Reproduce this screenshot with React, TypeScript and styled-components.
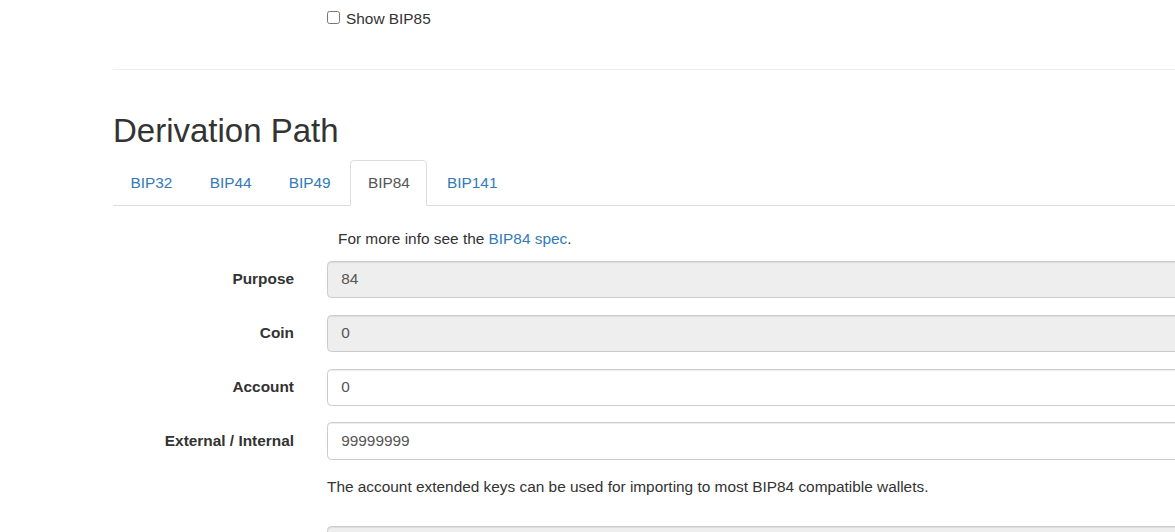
import React from "react";
import styled, { createGlobalStyle } from "styled-components";

const GlobalStyle = createGlobalStyle`
  html, body {
    margin: 0;
    padding: 0;
    overflow: hidden;
    background: #fff;
  }
  body {
    font-family: "Liberation Sans", Arial, Helvetica, sans-serif;
    font-size: 15.4px;
    line-height: 22px;
    color: #333;
  }
  * {
    box-sizing: border-box;
  }
`;

const rows = [
  { label: "Purpose", value: "84", readOnly: true },
  { label: "Coin", value: "0", readOnly: true },
  { label: "Account", value: "0", readOnly: false },
  { label: "External / Internal", value: "99999999", readOnly: false },
];

const tabs = ["BIP32", "BIP44", "BIP49", "BIP84", "BIP141"];

const App = () => (
  <>
    <GlobalStyle />
    <Page>
      <FormRow $top={8}>
        <Label />
        <Field>
          <CheckLabel>
            <Check type="checkbox" />
            Show BIP85
          </CheckLabel>
        </Field>
      </FormRow>
      <Rule />
      <Title>Derivation Path</Title>
      <Tabs>
        {tabs.map((t) => (
          <Tab key={t}>
            <TabLink href="#" $active={t === "BIP84"}>
              {t}
            </TabLink>
          </Tab>
        ))}
      </Tabs>
      <Panel>
        <FormRow $bottom={11}>
          <Label />
          <Field>
            <Info>
              For more info see the <A href="#">BIP84 spec</A>.
            </Info>
          </Field>
        </FormRow>
        {rows.map((r) => (
          <FormRow key={r.label}>
            <Label>{r.label}</Label>
            <Field>
              <Input readOnly defaultValue={r.value} $disabled={r.readOnly} />
            </Field>
          </FormRow>
        ))}
        <FormRow>
          <Label />
          <Field>
            <Help>
              The account extended keys can be used for importing to most
              BIP84 compatible wallets.
            </Help>
          </Field>
        </FormRow>
        <FormRow>
          <Label />
          <Field>
            <Area readOnly rows={3} />
          </Field>
        </FormRow>
      </Panel>
    </Page>
  </>
);

const Page = styled.div`
  display: flex;
  flex-direction: column;
  width: 1500px;
  padding-left: 113px;
`;

const FormRow = styled.div<{ $top?: number; $bottom?: number }>`
  display: grid;
  grid-template-columns: 181px 1fr;
  column-gap: 33px;
  margin-top: ${(p) => p.$top ?? 0}px;
  margin-bottom: ${(p) => p.$bottom ?? 16.5}px;
`;

const Label = styled.label`
  text-align: right;
  font-weight: bold;
  padding-top: 7.7px;
  white-space: nowrap;
`;

const Field = styled.div`
  min-width: 0;
`;

const CheckLabel = styled.label`
  display: flex;
  align-items: center;
  cursor: pointer;
`;

const Check = styled.input`
  width: 13px;
  height: 13px;
  margin: 0 6px 0 0;
  position: relative;
  top: -2px;
`;

const Rule = styled.hr`
  width: 100%;
  border: 0;
  border-top: 1px solid #eee;
  margin: 22px 0;
`;

const Title = styled.h2`
  font-size: 33px;
  font-weight: 500;
  line-height: 1.1;
  margin: 21px 0 11px;
`;

const Tabs = styled.ul`
  display: flex;
  list-style: none;
  margin: 0;
  padding: 0;
  border-bottom: 1px solid #ddd;
`;

const Tab = styled.li`
  margin-bottom: -1px;
  margin-right: 2.2px;
`;

const TabLink = styled.a<{ $active?: boolean }>`
  display: block;
  padding: 11px 16.5px;
  line-height: 22px;
  border: 1px solid ${(p) => (p.$active ? "#ddd" : "transparent")};
  border-bottom-color: transparent;
  border-radius: 4.4px 4.4px 0 0;
  background: ${(p) => (p.$active ? "#fff" : "transparent")};
  color: ${(p) => (p.$active ? "#555" : "#337ab7")};
  text-decoration: none;
`;

const Panel = styled.div`
  padding-top: 22px;
`;

const Info = styled.p`
  margin: 0;
  padding-left: 11px;
`;

const A = styled.a`
  color: #337ab7;
  text-decoration: none;
`;

const Input = styled.input<{ $disabled?: boolean }>`
  display: block;
  width: 100%;
  height: 37.4px;
  padding: 6.6px 13.2px;
  font-family: inherit;
  font-size: 15.4px;
  color: #555;
  background: ${(p) => (p.$disabled ? "#eee" : "#fff")};
  border: 1px solid #ccc;
  border-radius: 4.4px;
  box-shadow: inset 0 1px 1px rgba(0, 0, 0, 0.075);
  outline: none;
`;

const Area = styled.textarea`
  display: block;
  width: 100%;
  height: 90px;
  padding: 6.6px 13.2px;
  font-family: inherit;
  font-size: 15.4px;
  color: #555;
  background: #eee;
  border: 1px solid #ccc;
  border-radius: 4.4px;
  box-shadow: inset 0 1px 1px rgba(0, 0, 0, 0.075);
  resize: none;
`;

const Help = styled.p`
  margin: 0 0 11px;
`;

export default App;
